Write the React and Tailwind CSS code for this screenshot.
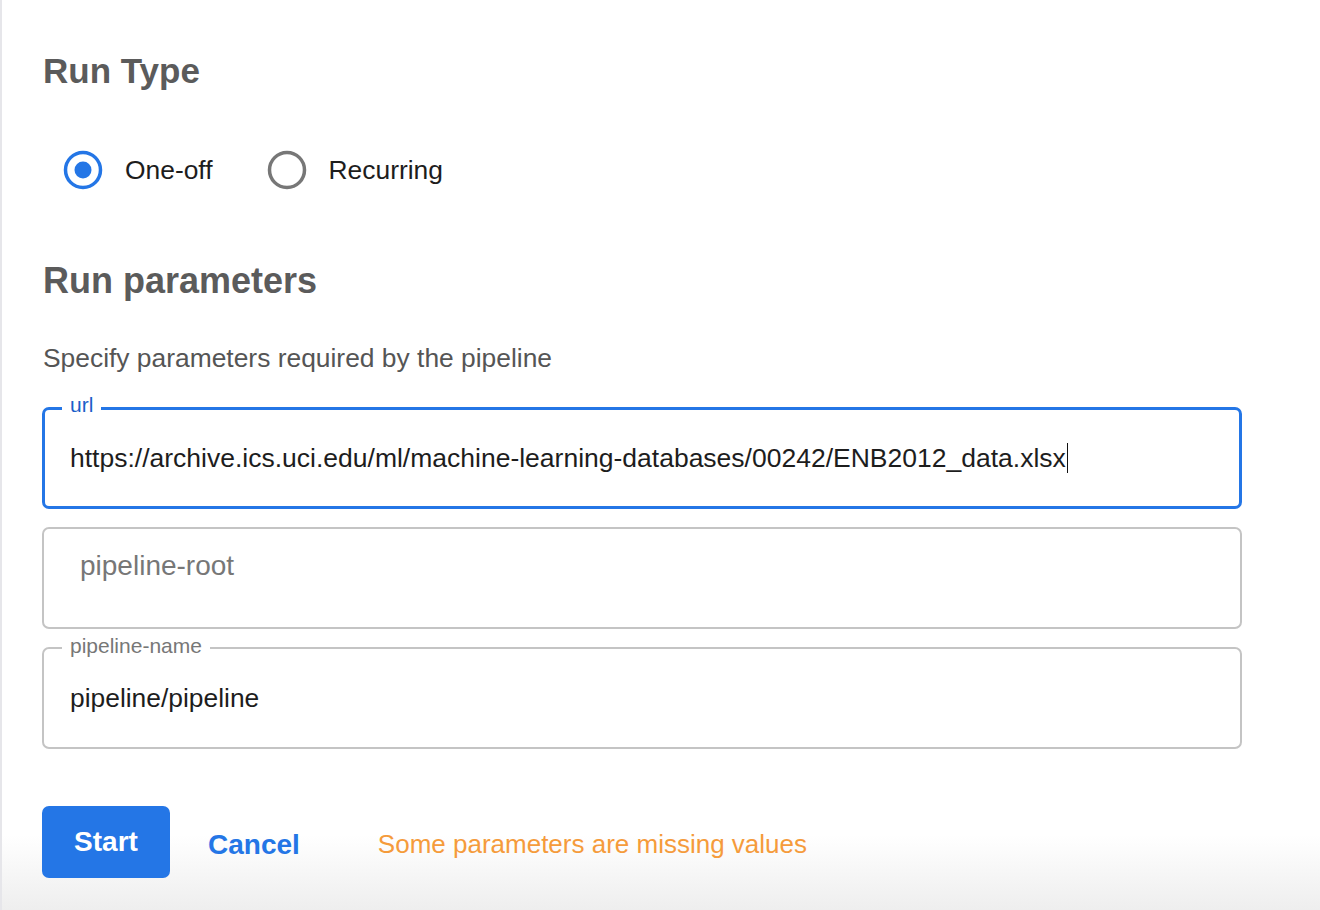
import React from "react";

function Radio({ checked }) {
  return (
    <svg width="40" height="40" viewBox="0 0 40 40">
      <circle
        cx="20"
        cy="20"
        r="17.5"
        fill="none"
        stroke={checked ? "#2476e6" : "#777777"}
        strokeWidth="3.5"
      />
      {checked && <circle cx="20" cy="20" r="8.5" fill="#2476e6" />}
    </svg>
  );
}

export default function App() {
  return (
    <div
      className="h-[910px] w-[1320px] overflow-hidden border-l-2 border-[#e6e6ea] bg-[linear-gradient(to_bottom,#ffffff_835px,#eeeeee_910px)] pl-[40px] text-[#202124]"
      style={{ fontFamily: '"Liberation Sans", Arial, Helvetica, sans-serif' }}
    >
      <div className="mt-[51px] h-[40px] pl-[1px] text-[35px] font-bold leading-[40px] text-[#5b5b5b]">
        Run Type
      </div>

      <div className="mt-[59px] flex h-[40px] items-center">
        <div className="ml-[21px] flex items-center">
          <Radio checked />
          <span className="ml-[22px] text-[26.4px] leading-[32px] text-[#1d1d1d]">One-off</span>
        </div>
        <div className="ml-[54px] flex items-center">
          <Radio />
          <span className="ml-[22px] text-[26.4px] leading-[32px] text-[#1d1d1d]">Recurring</span>
        </div>
      </div>

      <div className="mt-[71px] h-[40px] pl-[1px] text-[36px] font-bold leading-[40px] text-[#5b5b5b]">
        Run parameters
      </div>

      <div className="mt-[41px] h-[32px] pl-[1px] text-[26.4px] leading-[32px] text-[#555555]">
        Specify parameters required by the pipeline
      </div>

      <div className="relative mt-[33px] flex h-[102px] w-[1200px] items-center rounded-[7px] border-[3px] border-[#2476e6] pl-[25px]">
        <span className="absolute left-[17px] top-[-17px] bg-white px-[8px] text-[21px] leading-[24px] text-[#1c5fc9]">
          url
        </span>
        <span className="text-[26.5px] leading-[32px] text-[#1d1d1d]">
          https://archive.ics.uci.edu/ml/machine-learning-databases/00242/ENB2012_data.xlsx
        </span>
        <span className="ml-[1px] h-[30px] border-l-[1.5px] border-[#111111]"></span>
      </div>

      <div className="mt-[18px] h-[102px] w-[1200px] rounded-[7px] border-2 border-[#c4c4c4] pl-[36px] pt-[21px]">
        <span className="text-[28px] leading-[32px] text-[#777777]">pipeline-root</span>
      </div>

      <div className="relative mt-[18px] flex h-[102px] w-[1200px] items-center rounded-[7px] border-2 border-[#c4c4c4] pl-[26px]">
        <span className="absolute left-[18px] top-[-15px] bg-white px-[8px] text-[21px] leading-[24px] text-[#777777]">
          pipeline-name
        </span>
        <span className="text-[26.4px] leading-[32px] text-[#1d1d1d]">pipeline/pipeline</span>
      </div>

      <div className="mt-[57px] flex items-center">
        <div className="flex h-[72px] w-[128px] items-center justify-center rounded-[7px] bg-[#2476e6] text-[28px] font-bold text-white">
          Start
        </div>
        <div className="ml-[38px] mt-[5px] text-[28px] font-bold text-[#2476e6]">Cancel</div>
        <div className="ml-[78px] mt-[5px] text-[26px] text-[#f59b3b]">
          Some parameters are missing values
        </div>
      </div>
    </div>
  );
}
